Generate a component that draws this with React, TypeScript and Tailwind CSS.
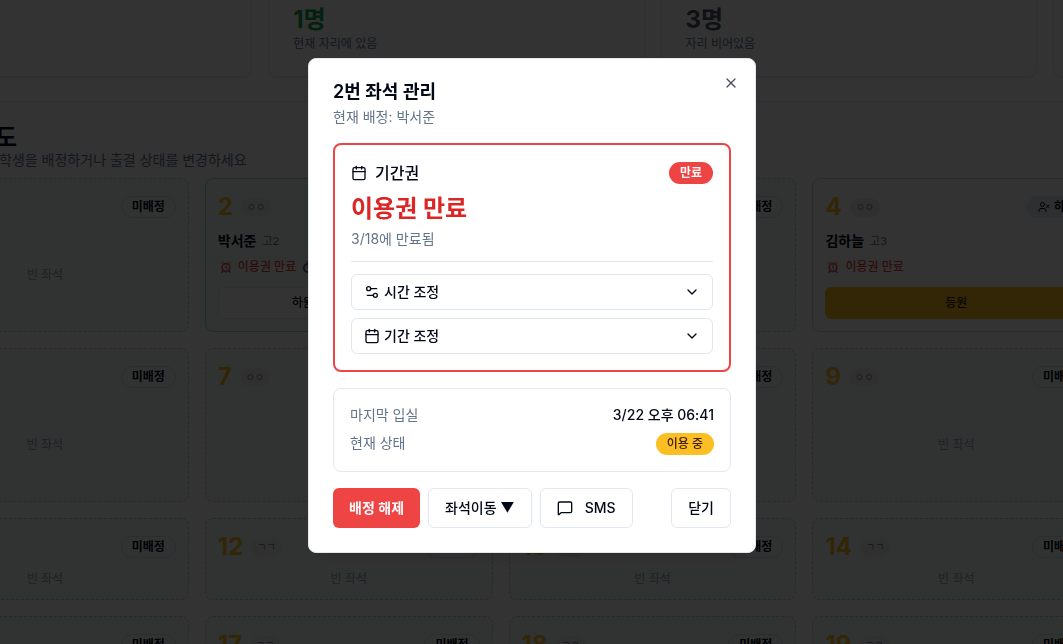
import type { ReactNode } from 'react';
import { Calendar, ChevronDown, MessageSquare, Settings2, UserCheck, UserX, X } from 'lucide-react';

interface Seat {
  number: number;
  zone: string;
  student?: string;
  grade?: string;
  present?: boolean;
}

const seatRows: { height: string; seats: Seat[] }[] = [
  {
    height: 'min-h-[154px]',
    seats: [
      { number: 1, zone: 'ㅇㅇ' },
      { number: 2, zone: 'ㅇㅇ', student: '박서준', grade: '고2', present: true },
      { number: 3, zone: 'ㅇㅇ' },
      { number: 4, zone: 'ㅇㅇ', student: '김하늘', grade: '고3', present: false },
      { number: 5, zone: 'ㅇㅇ' },
    ],
  },
  {
    height: 'min-h-[154px]',
    seats: [6, 7, 8, 9, 10].map((number) => ({ number, zone: 'ㅇㅇ' })),
  },
  {
    height: 'min-h-[82px]',
    seats: [11, 12, 13, 14, 15].map((number) => ({ number, zone: 'ㄱㄱ' })),
  },
  {
    height: 'min-h-[82px]',
    seats: [16, 17, 18, 19, 20].map((number) => ({ number, zone: 'ㄱㄱ' })),
  },
];

const stats = [
  { value: '8명', label: '전체 학생', color: 'text-slate-950' },
  { value: '1명', label: '현재 자리에 있음', color: 'text-[#16a34a]' },
  { value: '3명', label: '자리 비어있음', color: 'text-gray-600' },
  { value: '16석', label: '미배정 좌석', color: 'text-gray-600' },
];

function AlarmIcon() {
  return (
    <svg viewBox="0 0 16 16" className="size-4" aria-hidden="true">
      <path d="M2.8 5.8a2.4 2.4 0 0 1 3.6-2.8zM13.2 5.8a2.4 2.4 0 0 0-3.6-2.8z" fill="#fbbf24" />
      <path d="M4.8 12.2l-1.2 1.4M11.2 12.2l1.2 1.4" stroke="#9f1239" strokeWidth="1.2" />
      <circle cx="8" cy="8.6" r="3.9" fill="#f1f5f9" stroke="#e8577a" strokeWidth="1.8" />
      <path d="M8 6.4v2.2l1.2.8" fill="none" stroke="#334155" strokeWidth=".9" />
    </svg>
  );
}

function StopwatchIcon() {
  return (
    <svg viewBox="0 0 16 16" className="size-4" aria-hidden="true">
      <path d="M8 2.5v2M6.5 2.5h3M11.5 4.2l1 1" stroke="#64748b" strokeWidth="1.2" />
      <circle cx="8" cy="9" r="4.2" fill="#e2e8f0" stroke="#5b5566" strokeWidth="1.8" />
      <path d="M8 6.6V9" stroke="#e11d48" strokeWidth="1" />
    </svg>
  );
}

function Badge({ className, children }: { className: string; children: ReactNode }) {
  return (
    <span className={`inline-flex h-[22px] items-center rounded-full border px-2.5 text-xs whitespace-nowrap ${className}`}>
      {children}
    </span>
  );
}

function SeatCard({ seat, height }: { seat: Seat; height: string }) {
  const frame = !seat.student
    ? 'border-dashed border-[#c8cdd5] bg-[#f6fdf9]'
    : seat.present
      ? 'border-[#86efac] bg-[#f0fdf4]'
      : 'border-slate-300 bg-[#fcfcfc]';

  return (
    <div className={`flex flex-col rounded-lg border p-3 ${height} ${frame}`}>
      <div className="flex h-8 items-center justify-between">
        <div className="flex items-center gap-2">
          <span className="text-2xl font-bold text-[#fbbf24]">{seat.number}</span>
          <span className="rounded-full bg-[#f3eff1] px-1.5 py-0.5 text-[10px] leading-[15px] text-slate-500">{seat.zone}</span>
        </div>
        {!seat.student && <Badge className="border-[#d8dee6] font-semibold text-slate-950">미배정</Badge>}
        {seat.student && seat.present && (
          <Badge className="border-transparent bg-[#fbbf24] font-semibold text-[#451a03]">
            <UserCheck className="mr-1 size-3" />
            등원
          </Badge>
        )}
        {seat.student && !seat.present && (
          <Badge className="border-transparent bg-slate-200 font-semibold text-slate-950">
            <UserX className="mr-1 size-3" />
            하원
          </Badge>
        )}
      </div>

      {seat.student ? (
        <>
          <div className="mt-2 flex h-5 items-center gap-1.5">
            <span className="text-sm font-semibold text-slate-950">{seat.student}</span>
            <span className="text-[11px] text-slate-500">{seat.grade}</span>
          </div>
          <div className="mt-2 flex h-4 items-center gap-1 text-xs font-medium text-[#ef4444]">
            <AlarmIcon />
            <span>이용권 만료</span>
            {seat.present && <StopwatchIcon />}
          </div>
          {seat.present ? (
            <div className="mt-3 flex gap-2 text-xs font-medium text-slate-950">
              <button className="h-8 flex-1 rounded-md border border-slate-200 bg-white">하원</button>
              <button className="h-8 w-[84px] rounded-md border border-slate-200 bg-white">외출</button>
            </div>
          ) : (
            <button className="mt-3 h-8 rounded-md bg-[#fbbf24] text-xs font-medium text-[#451a03]">등원</button>
          )}
        </>
      ) : (
        <div className="mt-2 flex flex-1 items-center justify-center text-xs text-slate-400">빈 좌석</div>
      )}
    </div>
  );
}

function Dashboard() {
  return (
    <div className="-mr-[366px] -ml-[124px]">
      <div className="grid grid-cols-4 gap-4">
        {stats.map((stat) => (
          <div key={stat.label} className="rounded-b-lg border border-t-0 border-slate-200 px-6 pt-1 pb-6 shadow-xs">
            <div className={`text-2xl font-bold ${stat.color}`}>{stat.value}</div>
            <p className="text-xs text-slate-500">{stat.label}</p>
          </div>
        ))}
      </div>

      <section className="mt-6 rounded-lg border border-slate-200 px-6 py-6">
        <h1 className="text-2xl leading-6 font-bold text-slate-950">좌석 배치도</h1>
        <p className="text-sm text-slate-500">좌석을 클릭하여 학생을 배정하거나 출결 상태를 변경하세요</p>
        <div className="mt-2 flex flex-col gap-4">
          {seatRows.map((row) => (
            <div key={row.seats[0].number} className="grid grid-cols-5 gap-4">
              {row.seats.map((seat) => (
                <SeatCard key={seat.number} seat={seat} height={row.height} />
              ))}
            </div>
          ))}
        </div>
      </section>
    </div>
  );
}

function SeatDialog() {
  return (
    <div
      role="dialog"
      aria-modal="true"
      aria-labelledby="seat-dialog-title"
      className="relative w-full max-w-md rounded-lg border border-slate-200 bg-white p-6 shadow-lg"
    >
      <button aria-label="닫기" className="absolute top-4 right-4 opacity-70">
        <X className="size-4" />
      </button>

      <h2 id="seat-dialog-title" className="text-lg leading-[18px] font-semibold">2번 좌석 관리</h2>
      <p className="mt-1.5 text-sm text-[#64748b]">현재 배정: 박서준</p>

      <div className="mt-4 rounded-lg border-2 border-[#ef4444] p-4">
        <div className="flex h-6 items-center justify-between">
          <div className="flex items-center gap-2 font-medium">
            <Calendar className="size-4" />
            <span>기간권</span>
          </div>
          <Badge className="border-transparent bg-[#ef4444] font-bold text-slate-50">만료</Badge>
        </div>
        <div className="mt-2 text-2xl font-bold text-[#dc2626]">이용권 만료</div>
        <p className="mt-1 text-sm text-[#64748b]">3/18에 만료됨</p>

        <div className="mt-3 flex flex-col gap-2 border-t border-slate-200 pt-3">
          <button className="flex h-9 items-center justify-between rounded-md border border-slate-200 px-3 text-sm font-medium">
            <span className="flex items-center gap-1">
              <Settings2 className="size-4" />
              시간 조정
            </span>
            <ChevronDown className="size-4" />
          </button>
          <button className="flex h-9 items-center justify-between rounded-md border border-slate-200 px-3 text-sm font-medium">
            <span className="flex items-center gap-1">
              <Calendar className="size-4" />
              기간 조정
            </span>
            <ChevronDown className="size-4" />
          </button>
        </div>
      </div>

      <div className="mt-4 flex flex-col gap-2 rounded-lg border border-slate-200 p-4 text-sm">
        <div className="flex justify-between">
          <span className="text-[#64748b]">마지막 입실</span>
          <span className="font-medium">3/22 오후 06:41</span>
        </div>
        <div className="flex items-start justify-between">
          <span className="text-[#64748b]">현재 상태</span>
          <Badge className="border-transparent bg-[#fbbf24] font-medium text-[#422006]">이용 중</Badge>
        </div>
      </div>

      <div className="mt-4 flex gap-2 text-sm font-medium whitespace-nowrap">
        <button className="h-10 rounded-md bg-[#ef4444] px-4 font-semibold text-slate-50">배정 해제</button>
        <button className="h-10 rounded-md border border-slate-200 px-4">좌석이동 ▼</button>
        <button className="flex h-10 items-center gap-3 rounded-md border border-slate-200 px-4">
          <MessageSquare className="size-4" />
          SMS
        </button>
        <button className="ml-auto h-10 rounded-md border border-slate-200 px-4">닫기</button>
      </div>
    </div>
  );
}

export default function App() {
  return (
    <div className="h-screen overflow-hidden bg-white font-['Inter','Noto_Sans_CJK_KR',sans-serif] text-[#020817]">
      <Dashboard />
      <div className="fixed inset-0 flex items-center justify-center bg-black/80 pb-[33px] pl-px">
        <SeatDialog />
      </div>
    </div>
  );
}
